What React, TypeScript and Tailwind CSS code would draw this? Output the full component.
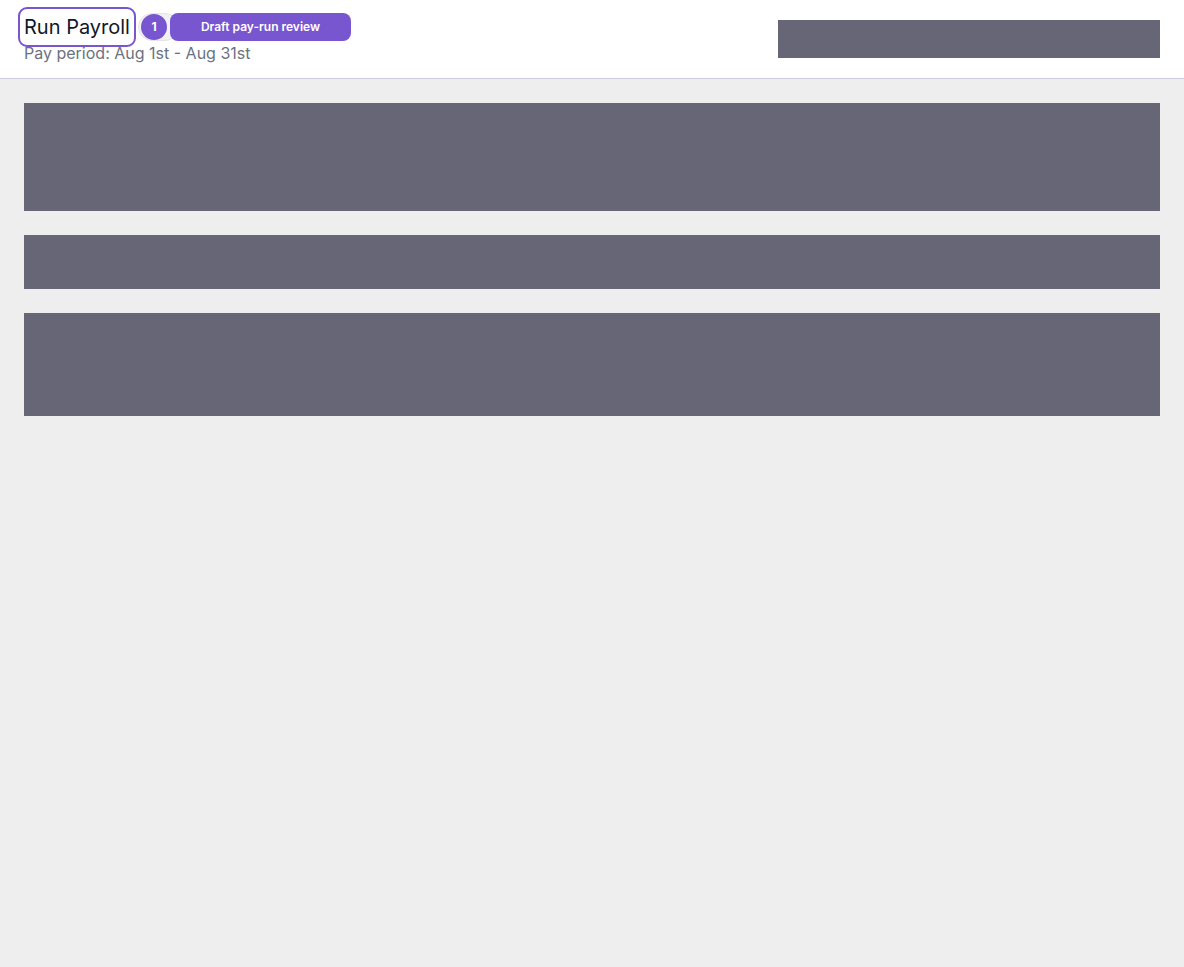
import React from "react";

export default function App() {
  return (
    <div
      className="min-h-[967px] bg-[#eeeeee]"
      style={{ fontFamily: "Inter, 'Noto Sans', sans-serif" }}
    >
      <header className="flex h-[79px] items-center justify-between border-b border-[#cfcbe0] bg-white px-6">
        <div className="flex flex-col">
          <div className="flex items-center">
            <h1 className="rounded-[3px] text-xl leading-7 text-[#111827] outline-2 outline-offset-[4px] outline-[#7856cf]">
              Run Payroll
            </h1>
            <div className="ml-2 flex items-center">
              <span className="flex h-[28px] items-center rounded-full border border-[#e5e5e5] bg-[#f2f2f2] pl-[2px] pr-[11px]">
                <span className="flex h-[26px] w-[26px] items-center justify-center rounded-full bg-[#7856cf] text-xs font-bold text-white">
                  1
                </span>
              </span>
              <span className="relative z-10 -ml-[9px] flex h-[28px] w-[181px] items-center justify-center rounded-lg bg-[#7856cf] text-xs font-semibold text-white">
                Draft pay-run review
              </span>
            </div>
          </div>
          <p className="text-base leading-6 text-[#6b7280]">
            Pay period: Aug 1st - Aug 31st
          </p>
        </div>
        <div className="h-[38px] w-[382px] bg-[#676677]" />
      </header>
      <main className="flex flex-col gap-6 p-6">
        <div className="h-[108px] bg-[#676677]" />
        <div className="h-[54px] bg-[#676677]" />
        <div className="h-[103px] bg-[#676677]" />
      </main>
    </div>
  );
}
